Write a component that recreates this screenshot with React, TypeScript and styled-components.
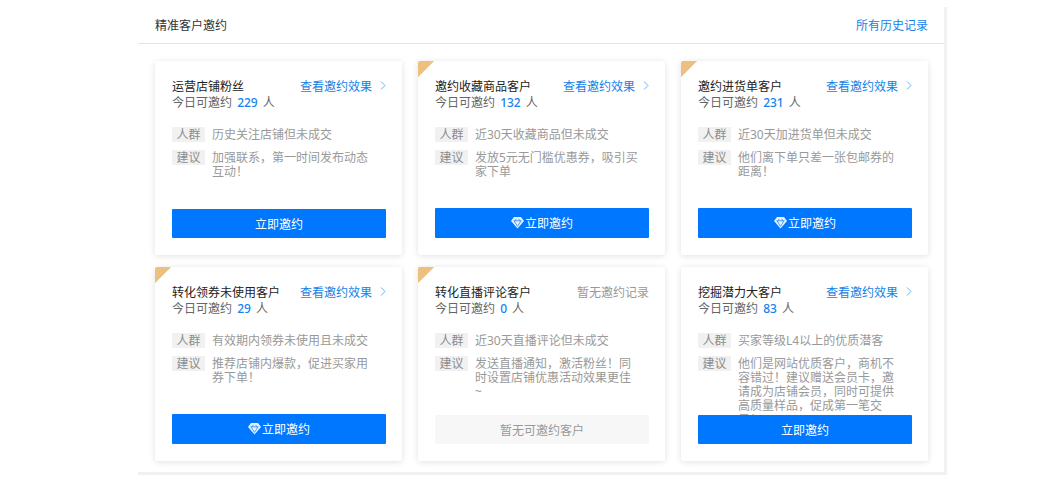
import React from "react";
import styled, { createGlobalStyle } from "styled-components";

const GlobalStyle = createGlobalStyle`
  * { box-sizing: border-box; }
  body {
    margin: 0;
    background: #fff;
    color: #333;
    font: 12px/16px "Noto Sans", "Noto Sans CJK SC", sans-serif;
  }
`;

const Page = styled.main`
  padding: 7px 107px 7px 138px;
`;

const Panel = styled.section`
  border-right: 3px solid #f1f1f1;
  border-bottom: 3px solid #f1f1f1;
`;

const PanelHeader = styled.header`
  display: flex;
  align-items: center;
  justify-content: space-between;
  height: 37px;
  padding: 2px 16px 0 17px;
  border-bottom: 1px solid #e4e4e4;
`;

const PanelTitle = styled.h1`
  margin: 0;
  font-size: 12px;
  font-weight: 400;
`;

const Link = styled.a`
  display: flex;
  align-items: center;
  gap: 8px;
  color: #1682e6;
  text-decoration: none;
`;

const CardGrid = styled.div`
  display: grid;
  grid-template-columns: repeat(3, minmax(0, 1fr));
  gap: 12px 16px;
  padding: 17px 16px 11px 17px;
`;

const CardBox = styled.article<{ $premium?: boolean }>`
  display: flex;
  flex-direction: column;
  height: 194px;
  padding: 18px 16px 17px 17px;
  border-radius: 2px;
  box-shadow: 0 1px 6px rgba(0, 0, 0, 0.12);
  background: ${(p) =>
    p.$premium
      ? "linear-gradient(135deg, #edc07f 0 11px, transparent 12px) #fff"
      : "#fff"};
`;

const CardHeader = styled.div`
  display: flex;
  justify-content: space-between;
  white-space: nowrap;
`;

const CardTitle = styled.h2`
  margin: 0;
  color: #222;
  font-size: 12px;
  font-weight: 400;
`;

const NoRecord = styled.span`
  color: #999;
`;

const Quota = styled.p`
  margin: 0 0 16px;
  color: #666;
`;

const Count = styled.span`
  margin: 0 2px;
  color: #1682f0;
  font-weight: 500;
`;

const Details = styled.div`
  display: flex;
  flex: 1 1 0;
  flex-direction: column;
  gap: 8px;
  min-height: 0;
`;

const Detail = styled.div`
  display: flex;
  flex: none;
  align-items: flex-start;
  gap: 7px;
  color: #999;
  line-height: 14px;
`;

const Tag = styled.span`
  flex: none;
  width: 33px;
  padding-top: 1px;
  background: #f1f1f1;
  color: #8c8c8c;
  text-align: center;
`;

const DetailText = styled.p`
  flex: 1;
  margin: 0 10px 0 0;
  padding-top: 1px;
  white-space: pre-line;
`;

/* Stays above advice text that runs longer than its space. */
const InviteButton = styled.button<{ $premium?: boolean }>`
  position: relative;
  display: flex;
  flex: none;
  align-items: center;
  justify-content: center;
  gap: 1px;
  width: 100%;
  height: ${(p) => (p.$premium ? "30px" : "29px")};
  padding: 2px 0 0;
  border: 0;
  border-radius: 1px;
  background: #0077ff;
  color: #fff;
  font: inherit;

  &:disabled {
    background: #f7f7f7;
    color: #999;
  }
`;

const Chevron = () => (
  <svg width="6" height="12" viewBox="0 0 6 12" fill="none" stroke="#6aaef2" aria-hidden="true">
    <path d="M1 0.5 L5 4.5 L1 8.5" />
  </svg>
);

const Diamond = () => (
  <svg width="13" height="16" viewBox="0 0 13 16" aria-hidden="true">
    <path d="M3 1h7l3 4-6.5 7.5L0 5z" fill="#e4f3ff" />
    <path
      d="M2.6 4.8h7.8M3 4.8l3.5 5.6L10 4.8M4.2 4.8L5.3 2.9M8.8 4.8L7.7 2.9"
      fill="none"
      stroke="#2388f5"
      strokeWidth="0.8"
    />
  </svg>
);

interface Segment {
  title: string;
  count: number;
  crowd: string;
  advice: string;
  premium?: boolean;
}

const segments: Segment[] = [
  { title: "运营店铺粉丝", count: 229, crowd: "历史关注店铺但未成交", advice: "加强联系，第一时间发布动态互动！" },
  { title: "邀约收藏商品客户", count: 132, crowd: "近30天收藏商品但未成交", advice: "发放5元无门槛优惠券，吸引买家下单", premium: true },
  { title: "邀约进货单客户", count: 231, crowd: "近30天加进货单但未成交", advice: "他们离下单只差一张包邮券的距离！", premium: true },
  { title: "转化领券未使用客户", count: 29, crowd: "有效期内领券未使用且未成交", advice: "推荐店铺内爆款，促进买家用券下单！", premium: true },
  { title: "转化直播评论客户", count: 0, crowd: "近30天直播评论但未成交", advice: "发送直播通知，激活粉丝！同时设置店铺优惠活动效果更佳\n~", premium: true },
  { title: "挖掘潜力大客户", count: 83, crowd: "买家等级L4以上的优质潜客", advice: "他们是网站优质客户，商机不容错过！建议赠送会员卡，邀请成为店铺会员，同时可提供高质量样品，促成第一笔交易！" },
];

function SegmentCard({ title, count, crowd, advice, premium }: Segment) {
  const available = count > 0;
  return (
    <CardBox $premium={premium}>
      <CardHeader>
        <CardTitle>{title}</CardTitle>
        {available ? (
          <Link href="#effect">
            查看邀约效果
            <Chevron />
          </Link>
        ) : (
          <NoRecord>暂无邀约记录</NoRecord>
        )}
      </CardHeader>
      <Quota>
        今日可邀约 <Count>{count}</Count> 人
      </Quota>
      <Details>
        <Detail>
          <Tag>人群</Tag>
          <DetailText>{crowd}</DetailText>
        </Detail>
        <Detail>
          <Tag>建议</Tag>
          <DetailText>{advice}</DetailText>
        </Detail>
      </Details>
      <InviteButton type="button" disabled={!available} $premium={premium && available}>
        {premium && available && <Diamond />}
        {available ? "立即邀约" : "暂无可邀约客户"}
      </InviteButton>
    </CardBox>
  );
}

export default function App() {
  return (
    <Page>
      <GlobalStyle />
      <Panel>
        <PanelHeader>
          <PanelTitle>精准客户邀约</PanelTitle>
          <Link href="#history">所有历史记录</Link>
        </PanelHeader>
        <CardGrid>
          {segments.map((segment) => (
            <SegmentCard key={segment.title} {...segment} />
          ))}
        </CardGrid>
      </Panel>
    </Page>
  );
}
